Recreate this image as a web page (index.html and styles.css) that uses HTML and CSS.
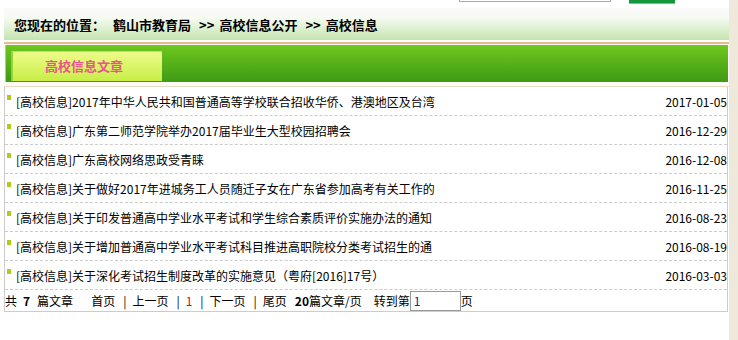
FILE: index.html
```html
<!DOCTYPE html>
<html lang="zh-CN">
<head>
    <meta charset="UTF-8">
    <title>高校信息</title>
    <link rel="stylesheet" href="styles.css">
</head>
<body>
<div class="page">
    <div class="main">
        <div class="topbar">
            <span class="search-box"></span>
            <span class="search-btn"></span>
        </div>

        <div class="crumb">
            <span class="crumb-label">您现在的位置：</span>
            <span>鹤山市教育局</span>
            <span class="arrow">&gt;&gt;</span>
            <span>高校信息公开</span>
            <span class="arrow">&gt;&gt;</span>
            <span>高校信息</span>
        </div>
        <div class="crumb-rule"></div>

        <div class="tabbar">
            <div class="tab">高校信息文章</div>
        </div>
        <div class="list-top"></div>

        <div class="list">
            <ul class="news">
                <li><i class="dot"></i><a class="title">[高校信息]2017年中华人民共和国普通高等学校联合招收华侨、港澳地区及台湾</a><span class="date">2017-01-05</span></li>
                <li><i class="dot"></i><a class="title">[高校信息]广东第二师范学院举办2017届毕业生大型校园招聘会</a><span class="date">2016-12-29</span></li>
                <li><i class="dot"></i><a class="title">[高校信息]广东高校网络思政受青睐</a><span class="date">2016-12-08</span></li>
                <li><i class="dot"></i><a class="title">[高校信息]关于做好2017年进城务工人员随迁子女在广东省参加高考有关工作的</a><span class="date">2016-11-25</span></li>
                <li><i class="dot"></i><a class="title">[高校信息]关于印发普通高中学业水平考试和学生综合素质评价实施办法的通知</a><span class="date">2016-08-23</span></li>
                <li><i class="dot"></i><a class="title">[高校信息]关于增加普通高中学业水平考试科目推进高职院校分类考试招生的通</a><span class="date">2016-08-19</span></li>
                <li><i class="dot"></i><a class="title">[高校信息]关于深化考试招生制度改革的实施意见（粤府[2016]17号）</a><span class="date">2016-03-03</span></li>
            </ul>
            <div class="pager">
                <span>共</span><b class="count">7</b><span>篇文章</span>
                <span class="first">首页</span>
                <span class="sep">|</span><span>上一页</span>
                <span class="sep">|</span><span class="current">1</span>
                <span class="sep">|</span><span>下一页</span>
                <span class="sep">|</span><span>尾页</span>
                <span class="per"><b>20</b>篇文章/页</span>
                <span class="goto">转到第</span><input class="page-input" type="text" value="1"><span>页</span>
            </div>
        </div>
    </div>
    <div class="side"></div>
</div>
</body>
</html>
```

FILE: styles.css
```css
body {
    margin: 0;
    background: #fff;
    font-family: "Noto Sans CJK SC", "DejaVu Sans", sans-serif;
    font-size: 12px;
    color: #000;
}
.page {
    display: flex;
    height: 340px;
    overflow: hidden;
}
.main {
    width: 725px;
    margin-left: 4px;
}
.side {
    flex: 1;
    background: #efe9dc;
}

/* top strip with the cut-off search form */
.topbar {
    display: flex;
    height: 8px;
}
.search-box {
    width: 150px;
    height: 1px;
    margin-left: 455px;
    border: 1px solid #aaa;
    border-top: none;
}
.search-btn {
    width: 46px;
    height: 3px;
    margin-left: 18px;
    background: #14963a;
    border-bottom: 1px solid #6cc86c;
}

/* breadcrumb */
.crumb {
    height: 32px;
    display: flex;
    align-items: center;
    padding-left: 10px;
    font-size: 13px;
    font-weight: bold;
    background: linear-gradient(#fafafa 0, #f6fbf2 30%, #c4e4ae 100%);
}
.crumb-label {
    margin-right: 8px;
}
.arrow {
    margin: 0 5px 0 8px;
    font-weight: bold;
}
.crumb-rule {
    height: 5px;
    background: linear-gradient(#fff 0, #fff 2px, #e8bb8e 2px, #e8bb8e 4px, #fbf6ee 4px);
}

/* green tab bar */
.tabbar {
    height: 37px;
    margin: 0 1px;
    padding: 6px 0 0 5px;
    background: linear-gradient(#6ec81e, #3e9a14);
    border-left: 1px solid #a6d86a;
    box-sizing: border-box;
}
.tab {
    width: 151px;
    height: 30px;
    padding-right: 7px;
    border-left: 2px solid #94d434;
    border-top: 1px solid #b4e858;
    box-sizing: border-box;
    background: linear-gradient(#eefc8a, #c6ee46);
    color: #ec5290;
    font-size: 13px;
    font-weight: bold;
    text-align: center;
    line-height: 28px;
}
.list-top {
    height: 4px;
    background: #fcfaf2;
    border-bottom: 1px solid #eadcc4;
}

/* article list */
.list {
    width: 724px;
    box-sizing: border-box;
    border: 1px solid #ccc;
    border-top: none;
}
.news {
    list-style: none;
    margin: 0;
    padding: 0;
}
.news li {
    display: flex;
    align-items: center;
    height: 28px;
    padding-left: 2px;
    border-bottom: 1px dashed #ccc;
}
.dot {
    width: 4px;
    height: 5px;
    margin: -7px 5px 0 0;
    background: #b6c81a;
}
.title {
    flex: 1;
    white-space: nowrap;
    overflow: hidden;
}
.date {
    font-size: 12px;
}

/* pager */
.pager {
    display: flex;
    align-items: center;
    height: 21px;
    white-space: nowrap;
}
.count {
    margin: 0 7px 0 6px;
}
.first {
    margin-left: 18px;
}
.sep {
    margin: 0 6px 0 8px;
}
.current {
    color: #f00;
}
.per {
    margin-left: 8px;
}
.goto {
    margin-left: 12px;
}
.page-input {
    width: 51px;
    height: 20px;
    padding: 0 3px;
    margin: 0;
    box-sizing: border-box;
    border: 1px solid #999;
    font-family: inherit;
    font-size: 12px;
    color: #2a1a7a;
}
```
